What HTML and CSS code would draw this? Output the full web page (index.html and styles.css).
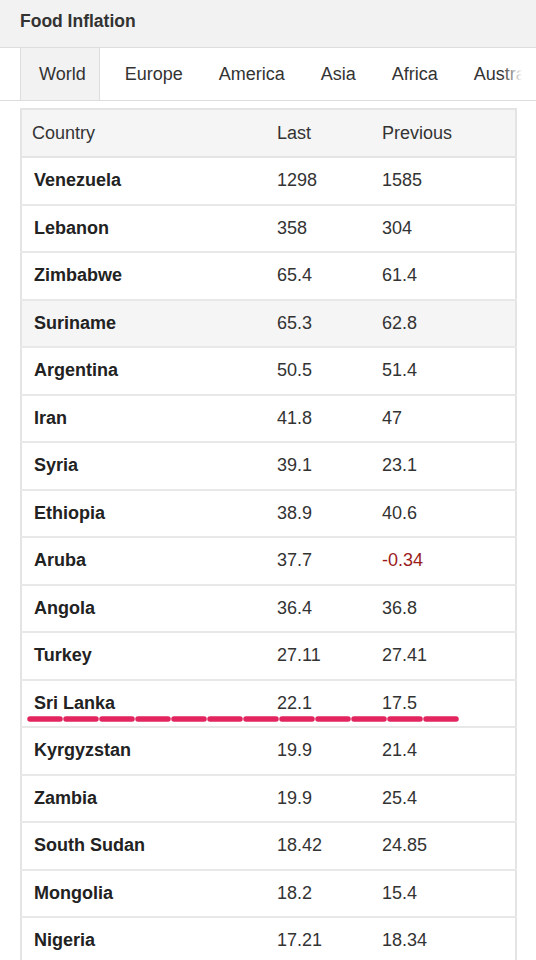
FILE: index.html
```html
<!DOCTYPE html>
<html lang="en">
<head>
  <meta charset="UTF-8">
  <meta name="viewport" content="width=device-width, initial-scale=1">
  <title>Food Inflation</title>
  <link rel="stylesheet" href="styles.css">
</head>
<body>

  <!-- Panel heading -->
  <div class="panel-heading">Food Inflation</div>

  <!-- Region tabs -->
  <ul class="tabs">
    <li class="tab active">World</li>
    <li class="tab">Europe</li>
    <li class="tab">America</li>
    <li class="tab">Asia</li>
    <li class="tab">Africa</li>
    <li class="tab">Australia</li>
  </ul>

  <!-- Country table -->
  <table class="data-table">
    <thead>
      <tr>
        <th class="col-country">Country</th>
        <th class="col-last">Last</th>
        <th>Previous</th>
      </tr>
    </thead>
    <tbody>
      <tr><td class="name">Venezuela</td><td>1298</td><td>1585</td></tr>
      <tr><td class="name">Lebanon</td><td>358</td><td>304</td></tr>
      <tr><td class="name">Zimbabwe</td><td>65.4</td><td>61.4</td></tr>
      <tr class="hover"><td class="name">Suriname</td><td>65.3</td><td>62.8</td></tr>
      <tr><td class="name">Argentina</td><td>50.5</td><td>51.4</td></tr>
      <tr><td class="name">Iran</td><td>41.8</td><td>47</td></tr>
      <tr><td class="name">Syria</td><td>39.1</td><td>23.1</td></tr>
      <tr><td class="name">Ethiopia</td><td>38.9</td><td>40.6</td></tr>
      <tr><td class="name">Aruba</td><td>37.7</td><td class="negative">-0.34</td></tr>
      <tr><td class="name">Angola</td><td>36.4</td><td>36.8</td></tr>
      <tr><td class="name">Turkey</td><td>27.11</td><td>27.41</td></tr>
      <tr>
        <td class="name marked">Sri Lanka
          <!-- hand-drawn highlight -->
          <svg class="scribble" width="446" height="10" viewBox="0 0 446 10">
            <path d="M4 5 L436 5" stroke="#e2245f" stroke-width="5.5" stroke-linecap="round" stroke-dasharray="30 6" fill="none"/>
          </svg>
        </td>
        <td>22.1</td><td>17.5</td>
      </tr>
      <tr><td class="name">Kyrgyzstan</td><td>19.9</td><td>21.4</td></tr>
      <tr><td class="name">Zambia</td><td>19.9</td><td>25.4</td></tr>
      <tr><td class="name">South Sudan</td><td>18.42</td><td>24.85</td></tr>
      <tr><td class="name">Mongolia</td><td>18.2</td><td>15.4</td></tr>
      <tr><td class="name">Nigeria</td><td>17.21</td><td>18.34</td></tr>
    </tbody>
  </table>

</body>
</html>
```

FILE: styles.css
```css
body {
  margin: 0;
  font-family: 'Liberation Sans', Arial, sans-serif;
  color: #333;
  background: #fff;
  overflow: hidden;
}

/* Heading bar */
.panel-heading {
  height: 47px;
  line-height: 43px;
  padding-left: 20px;
  background: #f2f2f2;
  border-bottom: 1px solid #ddd;
  font-size: 17.5px;
  font-weight: bold;
  color: #333;
}

/* Tabs */
.tabs {
  position: relative;
  display: flex;
  list-style: none;
  margin: 0;
  padding: 0 0 0 20px;
  height: 52px;
  border-bottom: 1px solid #ddd;
  overflow: hidden;
  white-space: nowrap;
}

.tabs::after {
  content: '';
  position: absolute;
  top: 0;
  right: 0;
  width: 34px;
  height: 100%;
  background: linear-gradient(to right, rgba(255, 255, 255, 0), #fff 60%);
}

.tab {
  padding: 0 18px;
  line-height: 52px;
  font-size: 18px;
  color: #333;
}

.tab.active {
  padding-right: 13px;
  margin-right: 7px;
  background: #f2f2f2;
  border-left: 1px solid #ddd;
  border-right: 1px solid #ddd;
}

/* Table */
.data-table {
  margin: 7px 19px 0 20px;
  width: 497px;
  border-collapse: collapse;
  table-layout: fixed;
  border: 2px solid #e4e4e4;
  font-size: 18px;
}

.data-table th {
  height: 46px;
  padding: 0 0 0 12px;
  text-align: left;
  font-weight: normal;
  background: #f5f5f5;
  border-bottom: 2px solid #e4e4e4;
}

.data-table th.col-country {
  width: 233px;
  padding-left: 10px;
}

.data-table th.col-last {
  width: 93px;
}

.data-table td {
  height: 45.5px;
  padding: 0 0 0 12px;
  border-top: 2px solid #e8e8e8;
}

.data-table td.name {
  font-weight: bold;
  color: #222;
}

.data-table tr.hover td {
  background: #f5f5f5;
}

.negative {
  color: #9b1c1c;
}

/* Highlight scribble under Sri Lanka */
.marked {
  position: relative;
}

.scribble {
  position: absolute;
  left: 4px;
  top: 33px;
}
```
